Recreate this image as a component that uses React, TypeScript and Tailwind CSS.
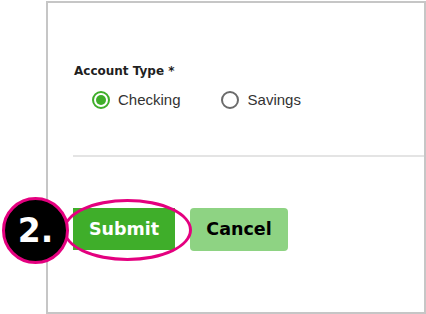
export default function App() {
  return (
    <div className="relative w-[426px] h-[314px] bg-white overflow-hidden">
      <div className="ml-[46px] mt-[1px] h-[313px] border-2 border-[#c6c6c6] bg-white">
        <div className="pl-[26px] pt-[60px]">
          <p
            className="text-[12px] font-bold text-[#1f1f1f] leading-[16px]"
            style={{ fontFamily: "'DejaVu Sans', sans-serif" }}
          >
            Account Type *
          </p>
          <div
            className="mt-[11px] ml-[18px] flex items-center text-[15px] text-[#333] leading-[20px]"
            style={{ fontFamily: "'Liberation Sans', Arial, sans-serif" }}
          >
            <label className="flex items-center gap-[8px]">
              <span className="size-[18px] rounded-full border-2 border-[#3fae2a] grid place-items-center">
                <span className="size-[10px] rounded-full bg-[#3fae2a]" />
              </span>
              Checking
            </label>
            <label className="ml-[40px] flex items-center gap-[9px]">
              <span className="size-[18px] rounded-full border-2 border-[#6b6b6b]" />
              Savings
            </label>
          </div>
        </div>
        <div className="mt-[45px] ml-[25px] h-[2px] bg-[#e4e4e4]" />
        <div
          className="mt-[51px] ml-[25px] flex gap-[15px]"
          style={{ fontFamily: "'DejaVu Sans', sans-serif" }}
        >
          <button className="w-[102px] h-[42px] bg-[#3fae2a] text-white text-[17.5px] font-bold">
            Submit
          </button>
          <button className="w-[98px] h-[43px] rounded-[4px] bg-[#8ed383] text-black text-[17.5px] font-bold">
            Cancel
          </button>
        </div>
      </div>

      {/* annotation overlay */}
      <div className="absolute left-[63px] top-[199px] w-[129px] h-[62px] rounded-[50%] border-[3px] border-[#e4007f]" />
      <div
        className="absolute left-[2px] top-[197px] size-[67px] rounded-full bg-black border-[3px] border-[#e4007f] grid place-items-center text-white text-[33px] font-bold"
        style={{ fontFamily: "'DejaVu Sans', sans-serif" }}
      >
        2.
      </div>
    </div>
  );
}
